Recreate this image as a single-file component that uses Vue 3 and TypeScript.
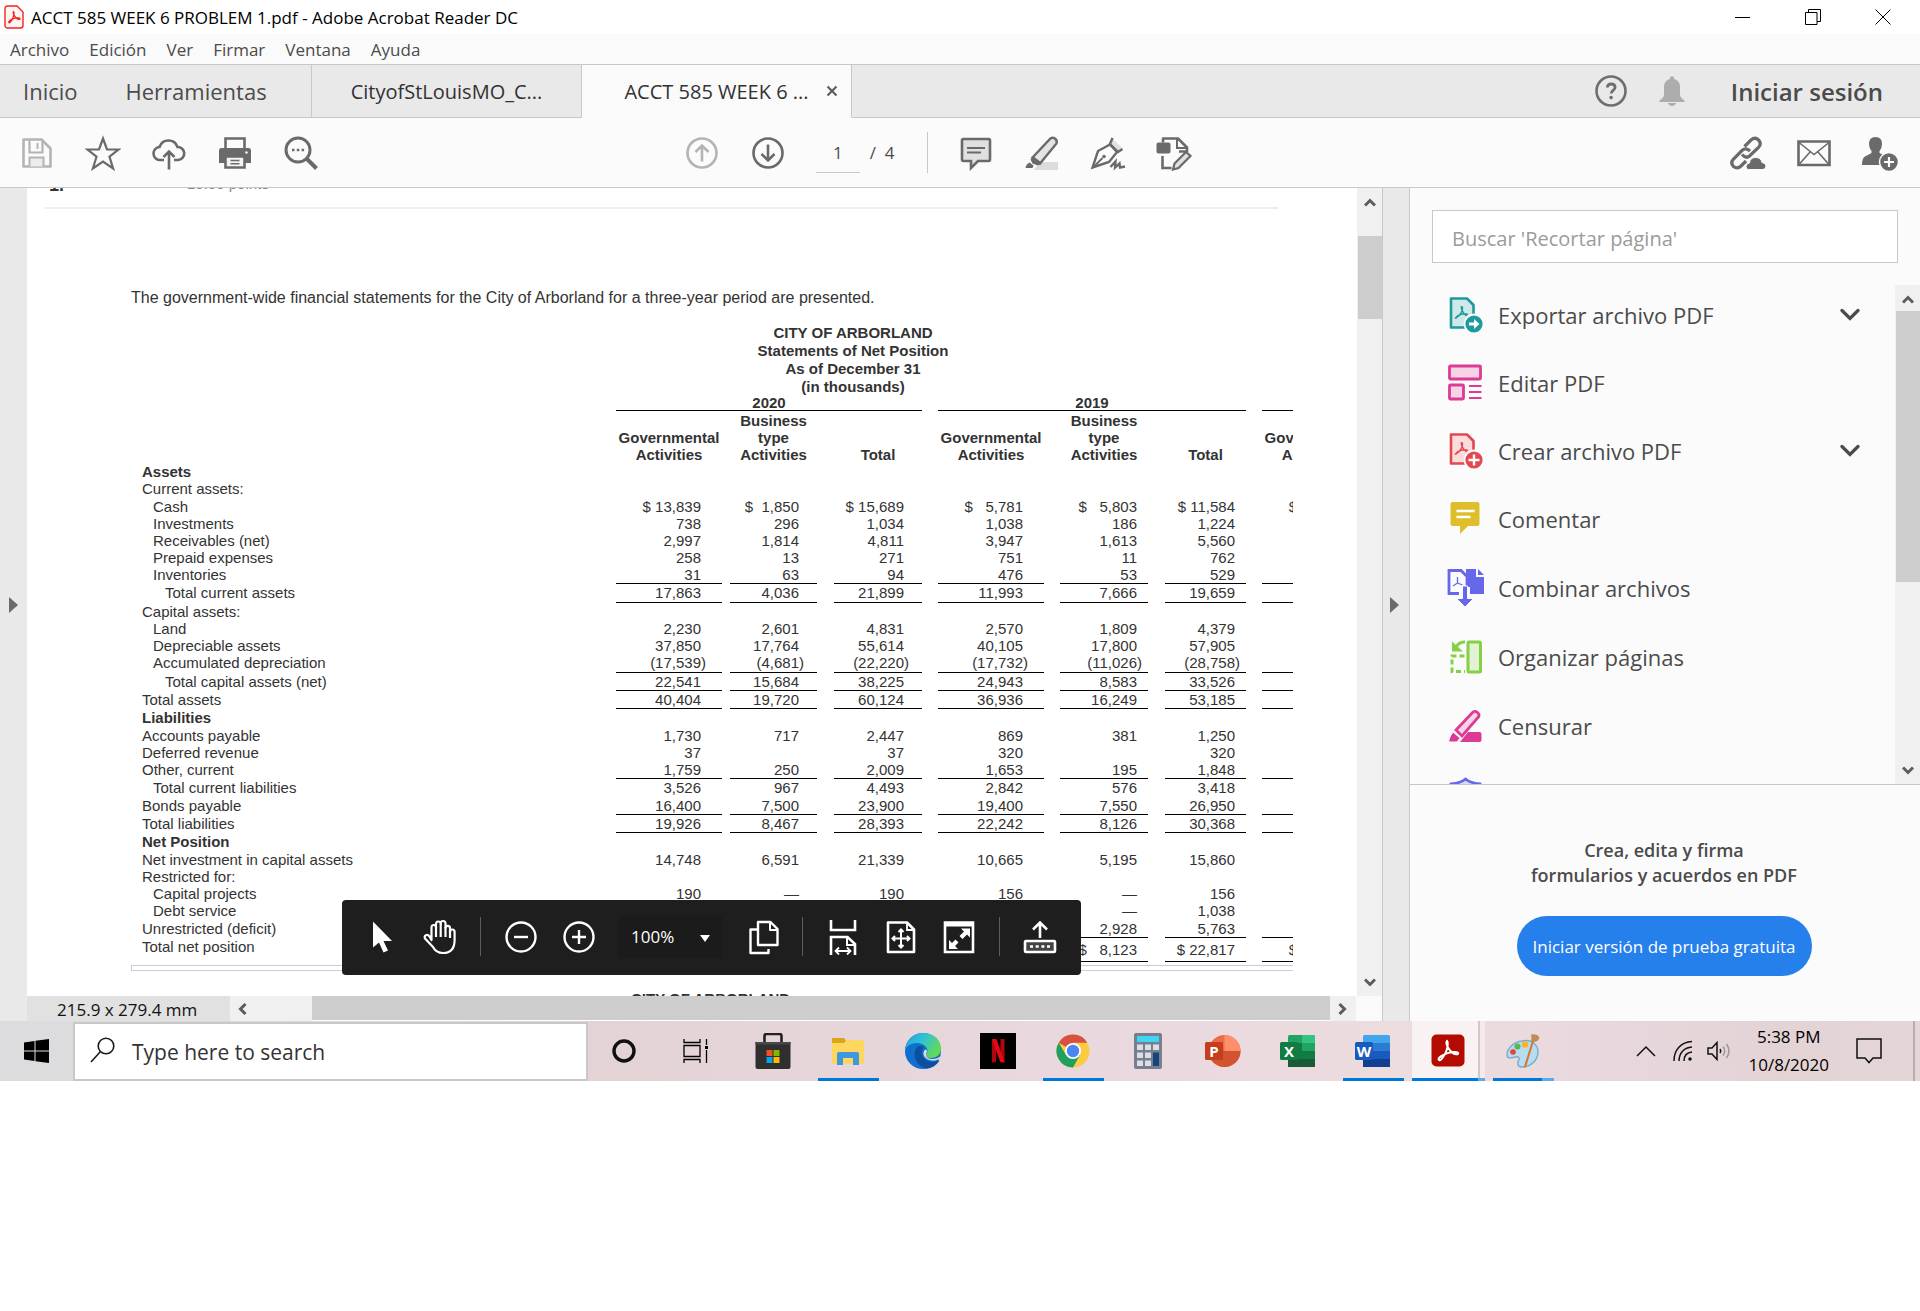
<script setup lang="ts">
import { ref } from 'vue'

interface Row {
  label: string
  height: 17 | 18 | 19 | 24
  indent?: 1 | 2
  heading?: boolean
  ruled?: boolean
  values?: string[]
}

const menus = ['Archivo', 'Edición', 'Ver', 'Firmar', 'Ventana', 'Ayuda']
const page = ref('1')
const zoom = ref('100%')
const toolQuery = ref('')
const taskQuery = ref('')

const tools = [
  { id: 'export', label: 'Exportar archivo PDF', expandable: true },
  { id: 'edit', label: 'Editar PDF', expandable: false },
  { id: 'create', label: 'Crear archivo PDF', expandable: true },
  { id: 'comment', label: 'Comentar', expandable: false },
  { id: 'combine', label: 'Combinar archivos', expandable: false },
  { id: 'organize', label: 'Organizar páginas', expandable: false },
  { id: 'redact', label: 'Censurar', expandable: false },
  { id: 'protect', label: 'Proteger', expandable: false },
]

const nb = '\u00a0'
const rows: Row[] = [
  { label: 'Assets', height: 17, heading: true },
  { label: 'Current assets:', height: 18 },
  { label: 'Cash', height: 17, indent: 1, values: [`$${nb}13,839`, `$${nb}${nb}1,850`, `$${nb}15,689`, `$${nb}${nb}${nb}5,781`, `$${nb}${nb}${nb}5,803`, `$${nb}11,584`, '$'] },
  { label: 'Investments', height: 17, indent: 1, values: ['738', '296', '1,034', '1,038', '186', '1,224', ''] },
  { label: 'Receivables (net)', height: 17, indent: 1, values: ['2,997', '1,814', '4,811', '3,947', '1,613', '5,560', ''] },
  { label: 'Prepaid expenses', height: 17, indent: 1, values: ['258', '13', '271', '751', '11', '762', ''] },
  { label: 'Inventories', height: 18, indent: 1, ruled: true, values: ['31', '63', '94', '476', '53', '529', ''] },
  { label: 'Total current assets', height: 19, indent: 2, ruled: true, values: ['17,863', '4,036', '21,899', '11,993', '7,666', '19,659', ''] },
  { label: 'Capital assets:', height: 17 },
  { label: 'Land', height: 17, indent: 1, values: ['2,230', '2,601', '4,831', '2,570', '1,809', '4,379', ''] },
  { label: 'Depreciable assets', height: 17, indent: 1, values: ['37,850', '17,764', '55,614', '40,105', '17,800', '57,905', ''] },
  { label: 'Accumulated depreciation', height: 19, indent: 1, ruled: true, values: ['(17,539)', '(4,681)', '(22,220)', '(17,732)', '(11,026)', '(28,758)', ''] },
  { label: 'Total capital assets (net)', height: 18, indent: 2, ruled: true, values: ['22,541', '15,684', '38,225', '24,943', '8,583', '33,526', ''] },
  { label: 'Total assets', height: 18, ruled: true, values: ['40,404', '19,720', '60,124', '36,936', '16,249', '53,185', ''] },
  { label: 'Liabilities', height: 18, heading: true },
  { label: 'Accounts payable', height: 17, values: ['1,730', '717', '2,447', '869', '381', '1,250', ''] },
  { label: 'Deferred revenue', height: 17, values: ['37', '', '37', '320', '', '320', ''] },
  { label: 'Other, current', height: 18, ruled: true, values: ['1,759', '250', '2,009', '1,653', '195', '1,848', ''] },
  { label: 'Total current liabilities', height: 18, indent: 1, values: ['3,526', '967', '4,493', '2,842', '576', '3,418', ''] },
  { label: 'Bonds payable', height: 18, ruled: true, values: ['16,400', '7,500', '23,900', '19,400', '7,550', '26,950', ''] },
  { label: 'Total liabilities', height: 18, ruled: true, values: ['19,926', '8,467', '28,393', '22,242', '8,126', '30,368', ''] },
  { label: 'Net Position', height: 18, heading: true },
  { label: 'Net investment in capital assets', height: 17, values: ['14,748', '6,591', '21,339', '10,665', '5,195', '15,860', ''] },
  { label: 'Restricted for:', height: 17 },
  { label: 'Capital projects', height: 17, indent: 1, values: ['190', '—', '190', '156', '—', '156', ''] },
  { label: 'Debt service', height: 18, indent: 1, values: ['', '', '', '', '—', '1,038', ''] },
  { label: 'Unrestricted (deficit)', height: 18, ruled: true, values: ['', '', '', '', '2,928', '5,763', ''] },
  { label: 'Total net position', height: 24, ruled: true, values: ['', '', '', '', `$${nb}${nb}${nb}8,123`, `$${nb}22,817`, '$'] },
]

const blank = ['', '', '', '', '', '', '']
</script>

<template>
  <div class="desktop">
    <header class="titlebar">
      <svg class="app-icon" width="20" height="24" viewBox="0 0 20 24" fill="none" stroke="#f0251c">
        <path d="M3.500 1h9.500l6 6v13.500a2.500 2.500 0 0 1-2.500 2.500h-13a2.500 2.500 0 0 1-2.500-2.500v-17a2.500 2.500 0 0 1 2.500-2.500z" fill="#fff5f4" stroke-width="1.400" />
        <path d="M9.500 6.500c-1.200 1 1 5 3 6.800 1.500 1.400 3.600 1.500 3.500.4-.2-1.200-4.500-.8-7 .2-2.300.9-5 2.600-4.200 3.700.9 1 2.800-1.900 3.900-4.400 1-2.400 1.700-6 .8-6.700z" stroke-width="1.300" />
      </svg>
      <h1>ACCT 585 WEEK 6 PROBLEM 1.pdf - Adobe Acrobat Reader DC</h1>
      <div class="window-controls">
        <button aria-label="Minimizar"><svg width="16" height="16" viewBox="0 0 16 16"><path d="M0 8.500h15" stroke="#000" /></svg></button>
        <button aria-label="Restaurar"><svg width="16" height="16" viewBox="0 0 16 16" fill="none" stroke="#000"><path d="M.5 3.500h11.500v12H.5z M3.500 3.500v-3h12v12h-3.500" /></svg></button>
        <button aria-label="Cerrar"><svg width="16" height="16" viewBox="0 0 16 16" stroke="#000"><path d="M.5.5l15 15M15.500.5l-15 15" /></svg></button>
      </div>
    </header>

    <nav class="menubar">
      <button v-for="m in menus" :key="m">{{ m }}</button>
    </nav>

    <div class="tabs">
      <div class="home-tabs">
        <button>Inicio</button>
        <button>Herramientas</button>
      </div>
      <div class="tab"><button class="tab-name">CityofStLouisMO_C...</button></div>
      <div class="tab active">
        <button class="tab-name">ACCT 585 WEEK 6 ...</button>
        <button class="tab-close" aria-label="Cerrar pestaña"><svg width="12" height="12" viewBox="0 0 12 12" stroke="#5a5a5a" stroke-width="2"><path d="M1.500 1.500l9 9M10.500 1.500l-9 9" /></svg></button>
      </div>
      <div class="account">
        <button aria-label="Ayuda">
          <svg width="32" height="32" viewBox="0 0 32 32" fill="none" stroke="#6e6e6e"><circle cx="16" cy="16" r="14.500" stroke-width="2.600" /><path d="M12.300 12.500c.2-2.300 1.700-3.500 3.900-3.500 2.300 0 3.900 1.300 3.900 3.300 0 3.200-3.900 3-3.900 6.300" stroke-width="2.800" /><circle cx="16.100" cy="22.600" r="1" fill="#6e6e6e" stroke-width="1.600" /></svg>
        </button>
        <button aria-label="Notificaciones">
          <svg width="26" height="30" viewBox="0 0 26 30" fill="#adadad"><path d="M11 3V1.500Q11 .5 12 .5h2q1 0 1 1V3c4 1 6 4 6 8v7c0 3 1.500 4.500 4.500 6.500V26H.5v-1.500C3.500 22.500 5 21 5 18v-7c0-4 2-7 6-8z" /><path d="M9 27h8c-.5 2-2 3-4 3s-3.500-1-4-3z" /></svg>
        </button>
        <button class="sign-in">Iniciar sesión</button>
      </div>
    </div>

    <div class="toolbar">
      <div class="tool-group">
        <button aria-label="Guardar"><svg width="36" height="36" viewBox="0 0 36 36" fill="none" stroke="#b4b4b4" stroke-width="2.600"><path d="M4.500 4.500h18l9 9v18h-27z" stroke-linejoin="round" /><path d="M10.500 5v12.500h13V5" stroke-width="2.200" /><path d="M18.500 8v6" stroke-width="2" /><path d="M10.500 31.500v-9h14v9" fill="#ededed" stroke-width="2" /></svg></button>
        <button aria-label="Favorito"><svg width="36" height="36" viewBox="0 0 36 36" fill="none" stroke="#6a6a6a" stroke-width="2.200"><path d="M18 3.500l4 11h11.500l-9 7.200 3.600 11.800L18 26.600 7.900 33.500l3.600-11.800-9-7.200H14z" /></svg></button>
        <button aria-label="Subir a la nube"><svg width="36" height="36" viewBox="0 0 36 36" fill="none" stroke="#6a6a6a" stroke-width="2.600"><path d="M13 25H9.500a6.500 6.500 0 0 1-1-13A9.500 9.500 0 0 1 26.500 12a6.500 6.500 0 0 1 .5 13h-4" /><path d="M18 34.500V17M12.500 22l5.500-5.500 5.500 5.500" /></svg></button>
        <button aria-label="Imprimir"><svg width="36" height="36" viewBox="0 0 36 36"><path d="M8.500 14V3.500h19V14" fill="none" stroke="#6a6a6a" stroke-width="2.600" /><path d="M4.500 13h27q2.500 0 2.500 2.500V28h-6v-6H8v6H2V15.500Q2 13 4.500 13z" fill="#6a6a6a" /><circle cx="29.500" cy="17.500" r="1.200" fill="#fff" /><path d="M8.500 21.500h19v11h-19z" fill="#f4f4f4" stroke="#6a6a6a" stroke-width="2.600" /><path d="M13.500 25.500h9M13.500 28.800h9" stroke="#6a6a6a" stroke-width="1.600" /></svg></button>
        <button aria-label="Buscar"><svg width="36" height="36" viewBox="0 0 36 36" fill="none" stroke="#6a6a6a"><circle cx="15" cy="15" r="12" stroke-width="3" /><path d="M23.500 23.500l10 10" stroke-width="4" /><path d="M9 15h2.500M13.800 15h2.500M18.600 15h2.500" stroke-width="2.600" /></svg></button>
      </div>
      <div class="tool-group page-group">
        <button aria-label="Página anterior"><svg width="36" height="36" viewBox="0 0 36 36" fill="none" stroke="#b4b4b4" stroke-width="2.600"><circle cx="18" cy="18" r="14.500" /><path d="M18 26.500V11M11.500 17l6.500-6.500 6.500 6.500" /></svg></button>
        <button aria-label="Página siguiente"><svg width="36" height="36" viewBox="0 0 36 36" fill="none" stroke="#6a6a6a" stroke-width="2.600"><circle cx="18" cy="18" r="14.500" /><path d="M18 9.500V25M11.500 19l6.500 6.500 6.500-6.500" /></svg></button>
        <div class="page-field"><input v-model="page" aria-label="Número de página" /><span>/&nbsp; 4</span></div>
        <i class="divider"></i>
        <button aria-label="Nota"><svg width="36" height="36" viewBox="0 0 36 36" fill="#e0e0e0" stroke="#6a6a6a" stroke-width="2.600"><path d="M5.500 4h25q1.500 0 1.500 1.500v19q0 1.500-1.500 1.500H20l-7 7v-7H5.500Q4 26 4 24.500v-19Q4 4 5.500 4z" /><path d="M9 13h18M9 17.500h14" stroke-width="1.800" /></svg></button>
        <button aria-label="Resaltar"><svg width="36" height="36" viewBox="0 0 36 36"><path d="M16 27h18v8H10z" fill="#dcdcdc" /><path d="M8.500 22.500L26.500 3.500q2-1.500 4.500 0 2.500 2 1.500 5L16 28.500z" fill="#e4e4e4" stroke="#6a6a6a" stroke-width="2.400" /><path d="M9 21l9 7-4 2.500-5.500-2-2-4z" fill="#6a6a6a" /><path d="M1.500 33q.5-4 4-5.500l4 3-1 2.500z" fill="#6a6a6a" /></svg></button>
        <button aria-label="Firmar"><svg width="36" height="36" viewBox="0 0 36 36" fill="none" stroke="#6a6a6a" stroke-width="2.400"><path d="M22.500 3.500l10 10-4.500 4-9.500-10z" fill="#e0e0e0" stroke="none" /><path d="M22.500 3l-2.500 6 8 8 4.500-3" /><path d="M20 9.500L8 16 2.500 32.500 19 27l8-10z" /><path d="M3 32.500l9.500-9.500" stroke-width="1.800" /><circle cx="14" cy="21.500" r="1.800" fill="#6a6a6a" stroke="none" /><path d="M20.500 32l5-5.500-.5 6 4.500-4 .5 4 5-1" /></svg></button>
        <button aria-label="Sello"><svg width="36" height="36" viewBox="0 0 36 36" fill="none" stroke="#6a6a6a" stroke-width="2.600"><path d="M7 7.500V3.500h15l9 9v4h-8" stroke-linejoin="round" /><path d="M21 4v9h9" stroke-width="2" /><path d="M6.500 21v12h9" /><rect x=".5" y="7.500" width="14" height="11" rx="2" fill="#6a6a6a" stroke="none" /><path d="M17 34.500l1.500-6L30 17l4.500 4-12 12z" fill="#e0e0e0" stroke-width="2.200" /></svg></button>
      </div>
      <div class="tool-group share-group">
        <button aria-label="Compartir vínculo"><svg width="36" height="36" viewBox="0 0 36 36" fill="none" stroke="#6a6a6a" stroke-width="3.200"><path d="M14.500 11.500l6.500-6.500q4-3.500 7.500 0t0 7.500L19.500 21q-3.500 3-7.500-1.500" /><path d="M20 16q-4-4-8-.5L3.500 24q-3.500 4 0 7.500 4 3 7.500-.5l5-5" /><path d="M18.500 34.500q-2.500 0-2.500-3t3.500-3.500q.5-5.500 6-5.500t6.500 5q4 .5 4 3.500t-3 3.500z" fill="#6a6a6a" stroke="#fbfbfb" stroke-width="1" /></svg></button>
        <button aria-label="Enviar por correo"><svg width="36" height="36" viewBox="0 0 36 36" fill="none" stroke="#6a6a6a" stroke-width="2.600"><path d="M2.500 6.500h31v23.500h-31z" /><path d="M3 7.500l15 12 15-12M3 29.500l11.500-13M33 29.500l-11.500-13" stroke-width="1.600" /></svg></button>
        <button aria-label="Añadir personas"><svg width="36" height="36" viewBox="0 0 36 36" fill="#6a6a6a"><path d="M13.500 2q6.500 0 6.500 7 0 4-2.500 7v2l5 2.500q2.500 1 3.500 3l-6 6.500H0q0-7 3-8.500l6.500-3.500v-2Q7 13 7 9q0-7 6.500-7z" /><circle cx="27" cy="27" r="9.500" stroke="#fbfbfb" stroke-width="1.500" /><path d="M27 22v10M22 27h10" stroke="#fff" stroke-width="2.200" /></svg></button>
      </div>
    </div>

    <main class="workspace">
      <button class="rail left" aria-label="Mostrar panel de navegación"><svg width="10" height="16" viewBox="0 0 10 16"><path d="M1 0l9 8-9 8z" fill="#6a6a6a" /></svg></button>

      <section class="viewer">
        <div class="view-row">
          <div class="document">
            <div class="question-head"><b>1.</b><span>10.00 points</span></div>
            <hr />
            <div class="question">
              <p>The government-wide financial statements for the City of Arborland for a three-year period are presented.</p>
              <table>
                <caption>CITY OF ARBORLAND<br />Statements of Net Position<br />As of December 31<br />(in thousands)</caption>
                <colgroup>
                  <col class="w-label" /><col class="w1" /><col class="w2" /><col class="w3" /><col class="w4" /><col class="w5" /><col class="w6" /><col class="w7" /><col />
                </colgroup>
                <thead>
                  <tr class="years">
                    <td></td>
                    <th colspan="3"><span>2020</span></th>
                    <th colspan="3" class="gap"><span>2019</span></th>
                    <th colspan="2" class="gap"><span>&nbsp;</span></th>
                  </tr>
                  <tr class="kinds">
                    <td></td>
                    <th class="c1">Governmental<br />Activities</th>
                    <th class="c2">Business<br />type<br />Activities</th>
                    <th class="c3">Total</th>
                    <th class="c4">Governmental<br />Activities</th>
                    <th class="c5">Business<br />type<br />Activities</th>
                    <th class="c6">Total</th>
                    <th class="c7">Governmental<br />Activities</th>
                    <td></td>
                  </tr>
                </thead>
                <tbody>
                  <tr v-for="r in rows" :key="r.label" :class="['h' + r.height, { ruled: r.ruled, heading: r.heading }]">
                    <th scope="row" :class="r.indent ? 'indent' + r.indent : ''">{{ r.label }}</th>
                    <td v-for="(v, i) in r.values ?? blank" :key="i" :class="'c' + (i + 1)">
                      <span :class="{ negative: v.startsWith('(') }">{{ v }}</span>
                    </td>
                    <td></td>
                  </tr>
                </tbody>
              </table>
              <div class="table-scroll"></div>
            </div>
            <div class="next-title">CITY OF ARBORLAND</div>

            <div class="floatbar">
              <button aria-label="Seleccionar"><svg width="36" height="36" viewBox="0 0 36 36" fill="#fff"><path d="M9 2.500v26l6-5 4.500 10 4.500-2-4.500-9.500h8.500z" /></svg></button>
              <button aria-label="Mano"><svg width="36" height="36" viewBox="0 0 36 36" fill="none" stroke="#fff" stroke-width="2.200" stroke-linejoin="round"><path d="M9.500 21V8.500q0-2.500 2.200-2.500T14 8.500V5q0-2.500 2.300-2.500T18.700 5v-.5q0-2.500 2.400-2.500t2.400 2.500V9q0-2.200 2.200-2.200T28 9v4q0-2.500 2.300-2.500t2.300 2.500v8q0 13-11.600 13-7 0-10-6L3 19.500q-1-2.500 1-3.300 2-.8 3.500 1.300z" /><path d="M14 8v10M18.700 5v13M23.500 8v10M28 12v7" /></svg></button>
              <i></i>
              <button aria-label="Alejar"><svg width="36" height="36" viewBox="0 0 36 36" fill="none" stroke="#fff" stroke-width="2.400"><circle cx="18" cy="18" r="14.500" /><path d="M11 18h14" /></svg></button>
              <button aria-label="Acercar"><svg width="36" height="36" viewBox="0 0 36 36" fill="none" stroke="#fff" stroke-width="2.400"><circle cx="18" cy="18" r="14.500" /><path d="M11 18h14M18 11v14" /></svg></button>
              <div class="zoom-field">
                <select v-model="zoom" aria-label="Nivel de zoom"><option>100%</option></select>
                <svg width="10" height="7" viewBox="0 0 10 7"><path d="M0 0h10L5 7z" fill="#fff" /></svg>
              </div>
              <button aria-label="Visualización de página"><svg width="36" height="36" viewBox="0 0 36 36" fill="none" stroke="#fff" stroke-width="2.400" stroke-linejoin="round"><path d="M14 3h12.500l7 7v16H14z" /><path d="M26 3.500V11h7" stroke-width="2" /><path d="M14 10.500H6.500V34h18v-4" /></svg></button>
              <i></i>
              <button aria-label="Ajustar ancho"><svg width="36" height="36" viewBox="0 0 36 36" fill="none" stroke="#fff" stroke-width="2.600"><path d="M6 1v10h24V1M6 36V18h16.500L30 25v11" /><path d="M22 18v8h8" stroke-width="2" /><path d="M11.500 32h13M14 28.500L10.500 32l3.500 3.500M22 28.500l3.500 3.500-3.500 3.500" stroke-width="1.800" /></svg></button>
              <button aria-label="Ajustar página"><svg width="36" height="36" viewBox="0 0 36 36" fill="none" stroke="#fff" stroke-width="2.600"><path d="M5 3.500h19l7 7V33H5z" stroke-linejoin="round" /><path d="M24 4v7h7" stroke-width="1.800" /><path d="M9.500 19.500h17M18 11v17M12 17l-2.500 2.500L12 22M24 17l2.500 2.500L24 22M15.500 13L18 10.500l2.500 2.500M15.500 26l2.500 2.500 2.500-2.500" stroke-width="2" /></svg></button>
              <button aria-label="Pantalla completa"><svg width="36" height="36" viewBox="0 0 36 36"><path d="M4 3.500h28V33H4z" fill="none" stroke="#fff" stroke-width="2.600" /><path d="M4 3.500h28v4H4z" fill="#fff" /><path d="M20 9.500h9v9l-3-3-4.500 4.500-3-3L23 12.500zM8 21l3 3 3.500-3.500 3 3L14 27l3 3H8z" fill="#fff" /></svg></button>
              <i></i>
              <button aria-label="Mostrar herramientas"><svg width="36" height="36" viewBox="0 0 36 36" fill="none" stroke="#fff" stroke-width="2.600"><rect x="3" y="22" width="30" height="11" rx="1" fill="#444" /><path d="M18 19V4M11 10.500L18 3.500l7 7" /><path d="M8 27.500h3M13.700 27.500h3M19.400 27.500h3M25 27.500h3" /></svg></button>
            </div>
          </div>
          <div class="scrollbar">
            <svg width="12" height="9" viewBox="0 0 12 9"><path d="M1 7.500l5-5 5 5" /></svg>
            <div class="thumb"></div>
            <svg width="12" height="9" viewBox="0 0 12 9"><path d="M1 1.500l5 5 5-5" /></svg>
          </div>
        </div>
        <div class="status-row">
          <div class="size">215.9 x 279.4 mm</div>
          <div class="arrow-cell"><svg width="9" height="12" viewBox="0 0 9 12"><path d="M7.500 1l-5 5 5 5" /></svg></div>
          <div class="hthumb"></div>
          <div class="arrow-end"><svg width="9" height="12" viewBox="0 0 9 12"><path d="M1.500 1l5 5-5 5" /></svg></div>
          <div class="corner"></div>
        </div>
      </section>

      <button class="rail right" aria-label="Ocultar panel de herramientas"><svg width="10" height="16" viewBox="0 0 10 16"><path d="M0 0l9 8-9 8z" fill="#6a6a6a" /></svg></button>

      <aside class="panel">
        <input v-model="toolQuery" class="tool-search" aria-label="Buscar herramientas" placeholder="Buscar 'Recortar página'" />
        <div class="tool-pane">
          <ul>
            <li v-for="t in tools" :key="t.id" :class="{ expandable: t.expandable }">
              <button>
                <svg width="38" height="38" viewBox="0 0 38 38" fill="none">
                  <g v-if="t.id === 'export' || t.id === 'create'" :stroke="t.id === 'export' ? '#1c9a9c' : '#e34850'">
                    <path d="M4 2.500h16l6.500 6.500v22.500h-22.500z" :fill="t.id === 'export' ? '#cfe9ea' : '#fadcde'" stroke-width="2.600" stroke-linejoin="round" />
                    <path d="M14.500 10c-1 2 1 6.500 5 10M15 10.500c1.500 2-.5 8.500-6.500 12M8 22.500c3-4.500 9-5.500 13-4" stroke-width="1.400" />
                    <circle cx="27" cy="28" r="9.500" :fill="t.id === 'export' ? '#1c9a9c' : '#e34850'" stroke="#fbfbfb" stroke-width="1.800" />
                    <path v-if="t.id === 'export'" d="M22 26.500h5V23l5.500 5-5.500 5v-3.500h-5z" fill="#fff" stroke="none" />
                    <path v-else d="M27 22.500v11M21.500 28h11" stroke="#fff" stroke-width="2.400" />
                  </g>
                  <g v-else-if="t.id === 'edit'" stroke="#dc3b94" stroke-width="2.800" fill="#f6d3e7">
                    <rect x="2.500" y="2" width="31" height="13" rx="1" /><rect x="2.500" y="21" width="14" height="14" rx="1" />
                    <path d="M22 22h12.500M22 28h12.500M22 34h12.500" stroke-width="2" />
                  </g>
                  <g v-else-if="t.id === 'comment'">
                    <path d="M5.500 2h25q2 0 2 2v20q0 2-2 2H21l-8 8v-8H5.500q-2 0-2-2V4q0-2 2-2z" fill="#dfbe2c" /><path d="M9.500 11h18M9.500 17h14" stroke="#fff" stroke-width="2.400" />
                  </g>
                  <g v-else-if="t.id === 'combine'">
                    <path d="M19 0h10v8h8v17H23v-7h-4z" fill="#6767ec" /><path d="M31 0l6 6h-6z" fill="#6767ec" />
                    <path d="M12 24.500H2V1.500h12l6 6V16" stroke="#6767ec" stroke-width="2.800" /><path d="M10.500 8v6L6 17M10.500 14l5 2" stroke="#6767ec" stroke-width="1.300" />
                    <path d="M15.500 17h5v12.500h6L18 38l-8.500-8.500h6z" fill="#6767ec" stroke="#fbfbfb" stroke-width="1" />
                  </g>
                  <g v-else-if="t.id === 'organize'" stroke="#86d045">
                    <rect x="21" y="4" width="12.500" height="30" rx="1" fill="#e3f2d5" stroke-width="3" /><path d="M17.500 18H5v15.500h13" stroke-width="3" stroke-dasharray="5 3" />
                    <path d="M18 4q-6 0-8.500 4.500" stroke-width="3.200" /><path d="M5 3.500l11 10H5z" fill="#86d045" stroke="none" />
                  </g>
                  <g v-else-if="t.id === 'redact'">
                    <path d="M21 25h11.500q2 0 2 2v6q0 2-2 2H13z" fill="#dc3b94" /><path d="M9 23L26 5q2-1.500 4.500.5t1 4.500L15 29z" fill="#f6d3e7" stroke="#dc3b94" stroke-width="2.800" />
                    <path d="M6 25l7 6-3 4H2q-1-3 4-10z" fill="#dc3b94" stroke="#fbfbfb" stroke-width="1" />
                  </g>
                  <path v-else d="M4 8q10-1 14.500-5Q23 7 33 8v12q0 12-14.500 18Q4 32 4 20z" fill="#d9d9f8" stroke="#6767ec" stroke-width="2.800" />
                </svg>
                <span>{{ t.label }}</span>
                <svg v-if="t.expandable" class="chevron" width="20" height="14" viewBox="0 0 20 14"><path d="M2 2.500l8 8 8-8" fill="none" stroke="#4a4a4a" stroke-width="3.200" stroke-linecap="round" /></svg>
              </button>
            </li>
          </ul>
          <div class="scrollbar tool-scroll">
            <svg width="12" height="9" viewBox="0 0 12 9"><path d="M1 7.500l5-5 5 5" /></svg>
            <div class="thumb"></div>
            <svg width="12" height="9" viewBox="0 0 12 9"><path d="M1 1.500l5 5 5-5" /></svg>
          </div>
        </div>
        <div class="promo">
          <p>Crea, edita y firma<br />formularios y acuerdos en PDF</p>
          <button>Iniciar versión de prueba gratuita</button>
        </div>
      </aside>
    </main>

    <footer class="taskbar">
      <button class="start" aria-label="Inicio de Windows"><svg width="25" height="24" viewBox="0 0 25 24"><path d="M0 3.500l10.500-1.500v9.500H0zM11.500 1.800L25 0v11.500H11.500zM0 12.500h10.500V22L0 20.500zM11.500 12.500H25V24l-13.500-1.800z" /></svg></button>
      <label class="task-search">
        <svg width="25" height="26" viewBox="0 0 25 26" fill="none" stroke="#1a1a1a" stroke-width="1.600"><circle cx="16" cy="9" r="7.800" /><path d="M10.500 14.500L1 25" /></svg>
        <input v-model="taskQuery" aria-label="Search" placeholder="Type here to search" />
      </label>
      <button class="task small" aria-label="Cortana"><svg width="26" height="26" viewBox="0 0 26 26"><circle cx="13" cy="13" r="10" fill="none" stroke="#111" stroke-width="3.400" /></svg></button>
      <button class="task small" aria-label="Task View"><svg width="26" height="24" viewBox="0 0 26 24" fill="none" stroke="#000" stroke-width="1.300"><path d="M1 0v3.500h16V0M1 24v-3.500h16V24M1 6.500h16v11H1zM23.500 0v6M23.500 11v13" /><path d="M22 7h3v3h-3z" fill="#000" stroke="none" /></svg></button>
      <div class="apps">
        <button class="task" aria-label="Microsoft Store"><svg width="36" height="36" viewBox="0 0 36 36"><path d="M9.500 11V3q0-2 2-2h13q2 0 2 2v8" fill="none" stroke="#222" stroke-width="2.600" /><path d="M.5 9h35v25q0 2-2 2h-31q-2 0-2-2z" fill="#2f2f2f" /><path d="M.5 9h35v2.500H.5z" fill="#484848" /><path d="M11.500 17h6v6h-6z" fill="#f25022" /><path d="M18.500 17h6v6h-6z" fill="#7fba00" /><path d="M11.500 24h6v6h-6z" fill="#00a4ef" /><path d="M18.500 24h6v6h-6z" fill="#ffb900" /></svg></button>
        <button class="task open" aria-label="Explorer"><svg width="36" height="36" viewBox="0 0 36 36"><path d="M2 5h12l3 4v6H2z" fill="#dfa31a" /><path d="M2 10h12l3-3h15q2 0 2 2v20q0 2-2 2H4q-2 0-2-2z" fill="#ffd75e" /><path d="M7 32V21q0-2 2-2h18q2 0 2 2v11h-6v-7H13v7z" fill="#3f97dd" /></svg></button>
        <button class="task" aria-label="Edge"><svg width="36" height="36" viewBox="0 0 36 36"><defs><linearGradient id="eg" x1="0" y1="0" x2="1" y2=".5"><stop offset="0" stop-color="#1f9de0" /><stop offset=".5" stop-color="#2fc3d6" /><stop offset="1" stop-color="#63d955" /></linearGradient></defs><circle cx="18" cy="18" r="18" fill="#0f6fcd" /><path d="M0 17C1 7 8.500 0 18 0c11 0 18 7 18 15.500 0 6-4.500 9.500-9.500 9.500-4 0-5.500-1.500-5.500-2.800 0-1.200 1.500-1.600 1.500-4.200C22.500 14 18 10 12.500 10 6 10 1.500 13 0 17z" fill="url(#eg)" /><path d="M13 13.500c-5 3-6 18.500 9 22 6-.5 11-4.500 12.500-8.500-5 3-12 2.500-15-1-3.500-4-3.500-8-1-11.500-1.500-1.500-3.500-1.700-5.500-1z" fill="#0d4f9e" /><path d="M34.500 26c-2 1-4.500 1.700-7 1.500-6-.2-9-4-9-7 0-1.500.7-3 2-4 3 1 .5 3.500.5 5.500 0 2.500 3 4 6.500 4 3 0 5.500-.8 7.500-2.500z" fill="#ead9de" /></svg></button>
        <button class="task" aria-label="Netflix"><svg width="36" height="36" viewBox="0 0 36 36"><path d="M0 0h36v36H0z" /><path d="M12 6h4v23l-4 .5zM20.500 6h4v23.500l-4-.5z" fill="#b1060f" /><path d="M12 6h4.500l8 23.500-4.300-.5z" fill="#e50914" /></svg></button>
        <button class="task open" aria-label="Chrome"><svg width="36" height="36" viewBox="0 0 36 36"><circle cx="18" cy="18" r="16.500" fill="#fbcb43" /><path d="M18 18L3.700 9.700A16.500 16.500 0 0 1 32.300 9.700H18z" fill="#d94f43" /><path d="M3.700 9.700A16.500 16.500 0 0 0 18 34.500l7-12.500L11 22z" fill="#1fa05c" /><circle cx="18" cy="18" r="8" fill="#fff" /><circle cx="18" cy="18" r="6.200" fill="#4b86f0" /></svg></button>
        <button class="task" aria-label="Calculator"><svg width="36" height="36" viewBox="0 0 36 36"><rect x="4" y="0" width="28" height="36" rx="2" fill="#75808c" /><path d="M7 3h22v6H7z" fill="#42d3f5" /><path d="M7 11.500h6v5.500H7zM15 11.500h6v5.500h-6zM23 11.500h6v5.500h-6zM7 19.500h6V25H7zM15 19.500h6V25h-6zM7 27.500h6V33H7zM15 27.500h6V33h-6z" fill="#dcdfe8" /><path d="M23 19.500h6V33h-6z" fill="#14437e" /></svg></button>
        <button class="task" aria-label="PowerPoint"><svg width="36" height="36" viewBox="0 0 36 36"><circle cx="19.500" cy="18" r="16" fill="#ed6c47" /><path d="M19.500 2a16 16 0 0 1 16 16h-16z" fill="#ff8f6b" /><path d="M3.500 18h32a16 16 0 0 1-32 0z" fill="#d35230" /><rect x="0" y="9" width="18" height="18" rx="1.500" fill="#c43e1c" /><text x="9" y="23.500" text-anchor="middle">P</text></svg></button>
        <button class="task" aria-label="Excel"><svg width="36" height="36" viewBox="0 0 36 36"><rect x="8" y="2" width="27" height="32" rx="1.500" fill="#21a366" /><path d="M22 2h12q1 0 1 1v7H22z" fill="#33c481" /><path d="M8 10h14v8H8z" fill="#107c41" /><path d="M8 18h27v8H8z" fill="#107c41" /><path d="M8 26h27v8H8z" fill="#185c37" /><rect x="0" y="9" width="18" height="18" rx="1.500" fill="#107c41" /><text x="9" y="23.500" text-anchor="middle">X</text></svg></button>
        <button class="task open" aria-label="Word"><svg width="36" height="36" viewBox="0 0 36 36"><rect x="8" y="2" width="27" height="32" rx="1.500" fill="#41a5ee" /><path d="M8 10h27v8H8z" fill="#2b7cd3" /><path d="M8 18h27v8H8z" fill="#185abd" /><path d="M8 26h27v8H8z" fill="#103f91" /><rect x="0" y="9" width="18" height="18" rx="1.500" fill="#185abd" /><text x="9" y="23.500" text-anchor="middle">W</text></svg></button>
        <button class="task current" aria-label="Acrobat Reader"><svg width="36" height="36" viewBox="0 0 36 36"><rect x="1.500" y="1.500" width="33" height="32" rx="5" fill="#b30b00" /><path d="M17 8c-2 2 1.500 8.500 5 11.500 2.500 2.200 6.500 2.500 6.200.6-.3-2-7.500-1.200-12 .5-4 1.500-8.700 4.500-7.400 6.300 1.500 1.600 5-3.300 7-7.500 1.800-4 2.700-10 1.200-11.400z" fill="none" stroke="#fff" stroke-width="2" /></svg></button>
        <button class="task open stacked" aria-label="Paint"><svg width="36" height="36" viewBox="0 0 36 36"><path d="M17 8C26 6 33 11 33 19c0 8-7 15-16 15-5 0-5-5-3-7 1-2-1-4-4-3-4 1-8 2-8-2C2 15 9 9 17 8z" fill="#b5dcf0" stroke="#76aecb" stroke-width="1.400" /><circle cx="8" cy="19" r="2.800" fill="#e2463d" /><circle cx="12.500" cy="13.500" r="3" fill="#5db748" /><circle cx="20" cy="11.500" r="3.200" fill="#fbb42a" /><path d="M29 8l-8 26-2 1 .5-3L27 8z" fill="#d87526" /><path d="M26 1.500q6-1 8.500 3-1 4-5.500 4.500l-3-1q1-3 0-6.500z" fill="#bd8d55" /></svg></button>
      </div>
      <div class="tray">
        <svg width="20" height="12" viewBox="0 0 20 12"><path d="M1 11l9-9 9 9" /></svg>
        <svg width="20" height="22" viewBox="0 0 20 22"><path d="M1 21C1 10 8 2 19 1.500M6 21c0-8 5-13.500 13-14M11 21c0-5 3-8.500 8-9" /><circle cx="17" cy="19" r="1.800" fill="#111" stroke="none" /></svg>
        <svg width="24" height="20" viewBox="0 0 24 20"><path d="M1 7h4l5-5.500v17L5 13H1z" /><path d="M13 8q1.500 2 0 4" /><path d="M16 5.500q3.500 4.500 0 9M19.500 3q5 7 0 14" stroke="#999" /></svg>
        <div class="clock"><span>5:38 PM</span><span>10/8/2020</span></div>
        <svg width="26" height="26" viewBox="0 0 26 26"><path d="M1 1h24v19H17l-4 4.500L9 20H1z" /></svg>
      </div>
    </footer>
  </div>
</template>

<style>
body {
  background: #fff;
}
</style>

<style scoped>
.desktop {
  font-family: 'Open Sans', 'Noto Sans', sans-serif;
  color: #4b4b4b;
}
button {
  border: 0;
  padding: 0;
  background: none;
  font: inherit;
  color: inherit;
}
input,
select {
  font: inherit;
  border: 0;
  padding: 0;
  outline: 0;
  border-radius: 0;
  box-sizing: border-box;
  min-width: 0;
}
svg {
  display: block;
  flex: none;
}

.titlebar {
  display: flex;
  align-items: center;
  height: 34px;
  padding: 0 29px 0 4px;
}
h1 {
  margin: 0 0 0 7px;
  font-size: 17px;
  font-weight: 400;
  color: #000;
  white-space: nowrap;
}
.window-controls {
  display: flex;
  gap: 54px;
  margin-left: auto;
}
.menubar {
  display: flex;
  gap: 20px;
  height: 30px;
  padding-left: 10px;
  background: #fafafa;
  border-bottom: 1px solid #c8c8c8;
  font-size: 17px;
}

.tabs {
  display: flex;
  height: 53px;
  background: #e9e9e9;
}
.home-tabs {
  box-sizing: border-box;
  display: flex;
  gap: 48px;
  width: 312px;
  padding-left: 23px;
  border-right: 1px solid #c8c8c8;
  border-bottom: 1px solid #c8c8c8;
  font-size: 22px;
}
.tab {
  box-sizing: border-box;
  position: relative;
  display: flex;
  justify-content: center;
  width: 270px;
  border-right: 1px solid #c8c8c8;
  border-bottom: 1px solid #c8c8c8;
  font-size: 20px;
  color: #323232;
}
.tab.active {
  background: #fafafa;
  border-bottom-color: #fafafa;
}
.tab-close {
  position: absolute;
  right: 13px;
  top: 20px;
}
.account {
  display: flex;
  flex: 1;
  align-items: center;
  justify-content: flex-end;
  padding-right: 37px;
  border-bottom: 1px solid #c8c8c8;
}
.account button {
  margin-left: 32px;
}
.account .sign-in {
  margin-left: 46px;
  font-size: 24px;
  font-weight: 600;
}

.toolbar {
  display: flex;
  align-items: center;
  height: 69px;
  padding: 0 22px 0 19px;
  background: #fbfbfb;
  border-bottom: 1px solid #c8c8c8;
}
.tool-group {
  display: flex;
  align-items: center;
  gap: 30px;
}
.page-group {
  margin-left: 19vw;
}
.share-group {
  margin-left: auto;
}
.page-field {
  display: flex;
  align-items: center;
  gap: 10px;
  width: 81px;
  font-size: 17px;
  white-space: nowrap;
}
.page-field input {
  width: 44px;
  height: 41px;
  text-align: center;
  background: none;
  border-bottom: 1px solid #c8c8c8;
  color: #4b4b4b;
}
.divider {
  width: 1px;
  height: 41px;
  background: #c8c8c8;
}

.workspace {
  display: flex;
  background: #fff;
}
.rail {
  flex: none;
  display: flex;
  align-items: center;
  justify-content: center;
  box-sizing: border-box;
  width: 27px;
  padding-right: 2px;
  background: #e9e9e9;
}
.rail.right {
  width: 28px;
  border-left: 1px solid #c8c8c8;
  border-right: 1px solid #c8c8c8;
}
.viewer {
  flex: 1;
  min-width: 0;
  display: flex;
  flex-direction: column;
}
.view-row {
  display: flex;
}
.document {
  position: relative;
  flex: 1;
  min-width: 0;
  overflow: hidden;
  font-family: 'Liberation Sans', Arial, sans-serif;
  font-size: 15px;
  color: #333;
}
.question-head {
  display: flex;
  height: 31px;
  margin-top: -12px;
  padding-left: 22px;
  line-height: 16px;
}
.question-head b {
  width: 138px;
  font-size: 18px;
  line-height: 18px;
}
.question-head span {
  color: #888;
}
hr {
  height: 2px;
  margin: 0 79px 0 18px;
  border: 0;
  background: #eee;
}
.question {
  overflow: hidden;
  margin: 79px 64px 0 104px;
}
.question p {
  margin: 0 0 16px;
  font-size: 16px;
  line-height: 20px;
  white-space: nowrap;
}
table {
  width: 1444px;
  table-layout: fixed;
  border-collapse: collapse;
}
caption {
  font-weight: 700;
  line-height: 18px;
}
.w-label { width: 485px; }
.w1 { width: 106px; }
.w2 { width: 95px; }
.w3 { width: 105px; }
.w4 { width: 122px; }
.w5 { width: 104px; }
.w6 { width: 98px; }
.w7 { width: 122px; }
td,
th {
  padding: 0;
}
.c2 { padding-left: 8px; }
.c3, .c6 { padding-left: 17px; }
.c4, .c5, .c7, .gap { padding-left: 16px; }
.years span {
  display: block;
  line-height: 14px;
  border-bottom: 1px solid #000;
}
.kinds th {
  height: 52px;
  line-height: 17px;
  vertical-align: bottom;
}
tbody th {
  padding-left: 11px;
  font-weight: 400;
  text-align: left;
  vertical-align: top;
}
tbody .heading th {
  font-weight: 700;
}
tbody .indent1 { padding-left: 22px; }
tbody .indent2 { padding-left: 34px; }
tbody td {
  text-align: right;
  vertical-align: top;
}
tbody td span {
  display: block;
  box-sizing: border-box;
  height: 100%;
  padding-right: 18px;
}
tbody .c1 span, tbody .c4 span { padding-right: 21px; }
tbody .c5 span, tbody .c6 span { padding-right: 11px; }
tbody .c7 span { padding-right: 71px; }
tbody td span.negative { padding-right: 13px; }
tbody .c1 span.negative, tbody .c4 span.negative { padding-right: 16px; }
tbody .c5 span.negative, tbody .c6 span.negative { padding-right: 6px; }
.ruled td span { border-bottom: 1px solid #000; }
.ruled td:last-child span { border: 0; }
.h17 { line-height: 17px; }
.h17 td span { height: 17px; }
.h18 { line-height: 18px; }
.h18 td span { height: 18px; }
.h18.ruled { line-height: 17px; }
.h19 { line-height: 18px; }
.h19 td span { height: 19px; }
.h24 td { line-height: 24px; }
.h24 th { line-height: 18px; }
.h24 td span { height: 24px; }
.table-scroll {
  height: 4px;
  margin-top: 3px;
  border: 1px solid #c8cede;
  border-right: 0;
}
.next-title {
  height: 6px;
  margin-top: 19px;
  padding-left: 604px;
  overflow: hidden;
  font-weight: 700;
  line-height: 17px;
}

.floatbar {
  position: absolute;
  left: 315px;
  bottom: 21px;
  display: flex;
  align-items: center;
  gap: 22px;
  box-sizing: border-box;
  height: 75px;
  padding: 0 23px 2px 22px;
  border-radius: 4px;
  background: #1e1e1e;
  color: #fff;
  font-family: 'Open Sans', 'Noto Sans', sans-serif;
}
.floatbar i {
  width: 1px;
  height: 39px;
  background: #5c5c5c;
}
.zoom-field {
  position: relative;
  width: 103px;
}
.zoom-field select {
  appearance: none;
  width: 100%;
  height: 42px;
  padding-left: 12px;
  background: #1b1b1b;
  color: #fff;
  font-size: 17px;
}
.zoom-field svg {
  position: absolute;
  right: 12px;
  top: 19px;
  pointer-events: none;
}

.scrollbar {
  flex: none;
  display: flex;
  flex-direction: column;
  align-items: center;
  box-sizing: border-box;
  width: 25px;
  padding: 10px 0 9px;
  background: #f0f0f0;
}
.scrollbar svg,
.status-row svg {
  fill: none;
  stroke: #5c5c5c;
  stroke-width: 3;
}
.thumb {
  width: 24px;
  height: 83px;
  margin: 29px 0 auto;
  background: #cdcdcd;
}
.status-row {
  display: flex;
  height: 25px;
}
.size {
  width: 173px;
  padding-left: 30px;
  background: #e1e1e1;
  color: #111;
  font-size: 17px;
  line-height: 27px;
  white-space: nowrap;
}
.arrow-cell,
.arrow-end {
  display: flex;
  align-items: center;
  background: #f0f0f0;
}
.arrow-cell {
  width: 74px;
  padding-left: 8px;
}
.hthumb {
  flex: 1;
  margin-bottom: 1px;
  background: #cdcdcd;
}
.arrow-end {
  width: 18px;
  padding-left: 8px;
}
.corner {
  width: 26px;
  background: #fafafa;
}

.panel {
  flex: none;
  display: flex;
  flex-direction: column;
  width: 510px;
  background: #fbfbfb;
}
.tool-search {
  height: 53px;
  margin: 22px 22px 22px;
  padding: 4px 19px 0;
  border: 1px solid #c8c8c8;
  background: #fff;
  font-size: 20px;
}
.tool-search::placeholder {
  color: #9b9b9b;
  opacity: 1;
}
.tool-pane {
  flex: 1 1 0;
  min-height: 0;
  display: flex;
  justify-content: space-between;
  overflow: hidden;
  border-bottom: 1px solid #c8c8c8;
}
ul {
  flex: 1;
  height: 0;
  margin: -4px 0 0;
  padding: 0 35px 0 37px;
  list-style: none;
}
li button {
  display: flex;
  align-items: center;
  gap: 13px;
  width: 100%;
  height: 69px;
  font-size: 22px;
}
.expandable button {
  height: 67px;
}
.chevron {
  margin-left: auto;
}
.tool-scroll .thumb {
  height: 271px;
  margin-top: 7px;
}
.promo {
  display: flex;
  flex-direction: column;
  align-items: center;
  padding: 53px 2px 45px 0;
}
.promo p {
  margin: 0 0 28px;
  font-size: 18px;
  font-weight: 600;
  line-height: 25px;
  text-align: center;
}
.promo button {
  width: 295px;
  height: 60px;
  border-radius: 30px;
  background: #2680eb;
  color: #fff;
  font-size: 17px;
}

.taskbar {
  display: flex;
  height: 60px;
  background: linear-gradient(90deg, #dcdcde 0, #dcdcde 73px, #e3d3d5 588px, #ead9df 1180px, #eedddd 1440px, #e8d8de 1600px, #e3d3d5 1780px, #e4d6d6 100%);
}
.start {
  width: 73px;
  padding-left: 24px;
}
.task-search {
  display: flex;
  align-items: center;
  gap: 17px;
  box-sizing: border-box;
  width: 515px;
  margin-top: 1px;
  padding-left: 15px;
  border: 2px solid #c8c8c8;
  background: #fff;
}
.task-search svg {
  margin-bottom: 4px;
}
.task-search input {
  flex: 1;
  font-size: 21px;
}
.task-search input::placeholder {
  color: #333;
  opacity: 1;
}
.task {
  position: relative;
  display: flex;
  align-items: center;
  justify-content: center;
  width: 75px;
}
.task.small {
  width: 72px;
}
.apps {
  display: flex;
  margin-left: 3px;
}
.task text {
  fill: #fff;
  font-size: 15px;
  font-weight: 700;
}
.open::after,
.current::after {
  content: '';
  position: absolute;
  left: 8px;
  right: 6px;
  bottom: 0;
  height: 3px;
  background: #0078d7;
}
.current {
  background: linear-gradient(90deg, transparent 2px, #f8f2f2 2px, #f8f2f2 68px, #d3c7c7 68px, #d3c7c7 70px, #f5eaea 70px);
}
.current::after {
  left: 2px;
  right: 0;
  background: linear-gradient(90deg, #0078d7 66px, #5ea9e8 66px);
}
.stacked::after {
  background: linear-gradient(90deg, #0078d7 49px, #5ea9e8 49px);
}
.tray {
  display: flex;
  align-items: center;
  margin-left: auto;
  padding-right: 31px;
  border-right: 2px solid #b9adae;
  margin-right: 5px;
}
.tray svg {
  fill: none;
  stroke: #111;
  stroke-width: 1.5;
  margin-right: 17px;
}
.tray svg:nth-of-type(2) {
  margin-right: 14px;
}
.tray svg:last-child {
  margin: 0;
}
.clock {
  display: flex;
  flex-direction: column;
  align-items: center;
  margin-right: 27px;
  font-size: 17px;
  line-height: 28px;
  color: #000;
}
</style>
